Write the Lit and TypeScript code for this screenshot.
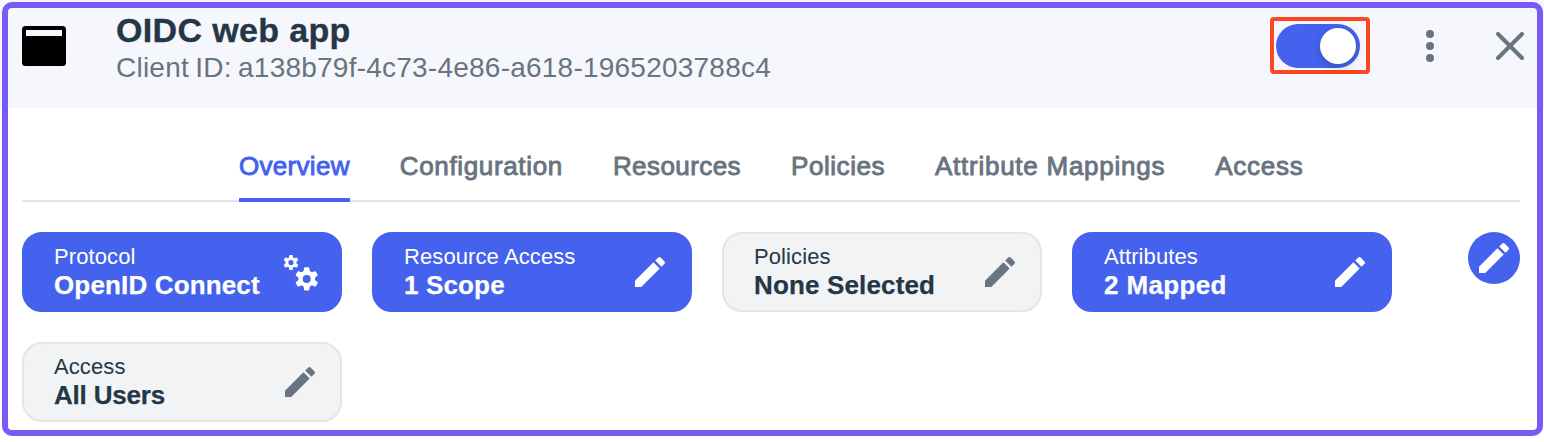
import { LitElement, html, css, svg } from "lit";
import { customElement, property } from "lit/decorators.js";
import { classMap } from "lit/directives/class-map.js";
import { styleMap } from "lit/directives/style-map.js";

const pencil = svg`<path d="M3 17.25V21h3.75L17.81 9.94l-3.75-3.75zM20.71 7.04a1 1 0 0 0 0-1.41l-2.34-2.34a1 1 0 0 0-1.41 0l-1.83 1.83 3.75 3.75z"/>`;

// A six-toothed gear around the origin, about 23 units tall.
const gear = (transform: string) => svg`<g transform=${transform}>
  <circle r="6.15" fill="none" stroke="#fff" stroke-width="4.3" />
  ${[0, 60, 120, 180, 240, 300].map(
    (a) => svg`<path transform="rotate(${a})" d="M-3.3-6.6L-2.6-10.8Q-2.5-11.6-1.7-11.6H1.7Q2.5-11.6 2.6-10.8L3.3-6.6Z" />`
  )}
</g>`;

@customElement("summary-card")
class SummaryCard extends LitElement {
  @property() label = "";
  @property() value = "";
  @property() icon = "pencil";
  @property({ type: Number }) tracking = 0.15;
  @property({ type: Boolean }) active = false;

  static styles = css`
    :host { display: block; }
    .card {
      box-sizing: border-box; width: 320px; height: 80px;
      display: flex; justify-content: space-between;
      padding: 9px 20px 0 30px;
      border: 2px solid #e3e5e9; border-radius: 20px;
      background: #f1f3f5; color: #253746;
    }
    .card.active { background: #4462ed; border-color: #4462ed; color: #fff; }
    .label { font-size: 22px; line-height: 28px; letter-spacing: 0.1px; }
    .value { font-size: 26px; line-height: 28px; font-weight: 700; -webkit-text-stroke: 0.25px currentColor; }
    .icon { display: block; width: 40px; height: 40px; margin-top: 9px; fill: #68747f; }
    .active .icon { fill: #fff; }
  `;

  render() {
    return html`<div class=${classMap({ card: true, active: this.active })}>
      <div>
        <div class="label">${this.label}</div>
        <div class="value" style=${styleMap({ letterSpacing: `${this.tracking}px` })}>${this.value}</div>
      </div>
      ${this.icon === "gears"
        ? html`<svg class="icon" viewBox="0 0 40 40">
            ${gear("translate(26.7 26.9)")}${gear("translate(11 10.5) scale(.65)")}
          </svg>`
        : html`<svg class="icon" viewBox="0 0 24 24">${pencil}</svg>`}
    </div>`;
  }
}

@customElement("app-root")
class AppRoot extends LitElement {
  static styles = css`
    :host {
      display: block; box-sizing: border-box; width: 1544px; height: 442px; overflow: hidden;
      padding: 2px 1px 0 2px; font-family: "Liberation Sans", Arial, sans-serif;
      background: linear-gradient(#f6f7fd 108px, #fff 108px);
    }
    .panel {
      box-sizing: border-box; height: 434px; border: 6px solid #7a5af0; border-radius: 10px;
    }
    .header {
      box-sizing: border-box; height: 100px; display: flex;
      padding: 0 13px 0 14px;
    }
    .app-icon { width: 44px; height: 40px; margin-top: 18px; flex: none; }
    .titles { margin: 2px 0 0 50px; flex: 1; }
    .title {
      font-size: 34px; line-height: 40px; font-weight: 700; color: #253746; letter-spacing: 0.35px;
      -webkit-text-stroke: 0.35px currentColor;
    }
    .client {
      font-size: 28px; line-height: 36px; color: #68747f; letter-spacing: 0.23px; word-spacing: -1.7px;
    }
    .switch-frame {
      box-sizing: border-box; width: 100px; height: 57px; margin-top: 9px; flex: none;
      border: 4px solid #fa4622; border-radius: 4px; padding: 3px 2px;
    }
    .switch {
      box-sizing: border-box; width: 84px; height: 44px; border-radius: 22px; background: #4462ed;
      display: flex; justify-content: flex-end; padding: 4px;
    }
    .knob { width: 36px; height: 36px; border-radius: 50%; background: #fff; box-shadow: 0 3px 8px rgba(0, 0, 0, 0.2); }
    .menu { width: 8px; height: 32px; margin: 22px 0 0 56px; fill: #68747f; flex: none; }
    .close {
      width: 28px; height: 28px; margin: 24px 0 0 62px; flex: none;
      stroke: #68747f; stroke-width: 4; stroke-linecap: round;
    }
    .tabs {
      box-sizing: border-box; height: 94px; margin: 0 17px 0 14px;
      display: flex; justify-content: flex-start; padding-left: 217px; gap: 50px;
      border-bottom: 2px solid #e3e3e9;
    }
    .tab {
      box-sizing: border-box; height: 94px; padding-top: 43px; white-space: nowrap;
      font-size: 26px; line-height: 30px; color: #68747f;
      -webkit-text-stroke: 0.9px currentColor;
    }
    .tab.selected { color: #4462ed; border-bottom: 4px solid #4462ed; }
    .body { display: flex; justify-content: space-between; padding: 30px 17px 0 14px; }
    .cards { display: flex; flex-wrap: wrap; gap: 30px; width: 1390px; }
    .edit {
      width: 52px; height: 52px; border-radius: 50%; background: #4462ed;
      display: flex; align-items: center; justify-content: center;
    }
    .edit-icon { width: 40px; height: 40px; fill: #fff; }
  `;

  private tabs = [
    { name: "Overview", tracking: 0.3 },
    { name: "Configuration", tracking: 0.65 },
    { name: "Resources", tracking: 0.43 },
    { name: "Policies", tracking: 0.55 },
    { name: "Attribute Mappings", tracking: 0.74 },
    { name: "Access", tracking: 0.75 },
  ];

  render() {
    return html`<div class="panel">
      <div class="header">
        <svg class="app-icon" viewBox="0 0 44 40">
          <path fill-rule="evenodd" d="M3.5 0H40.5Q44 0 44 3.5V36.5Q44 40 40.5 40H3.5Q0 40 0 36.5V3.5Q0 0 3.5 0ZM4 4V10H40V4Z" />
        </svg>
        <div class="titles">
          <div class="title">OIDC web app</div>
          <div class="client">Client ID: a138b79f-4c73-4e86-a618-1965203788c4</div>
        </div>
        <div class="switch-frame"><div class="switch"><div class="knob"></div></div></div>
        <svg class="menu" viewBox="0 0 8 32">
          <circle cx="4" cy="4" r="4" /><circle cx="4" cy="16" r="4" /><circle cx="4" cy="28" r="4" />
        </svg>
        <svg class="close" viewBox="0 0 28 28"><path d="M2 2l24 24M26 2l-24 24" /></svg>
      </div>
      <div class="tabs">
        ${this.tabs.map(
          (t, i) => html`<div
            class=${classMap({ tab: true, selected: i === 0 })}
            style=${styleMap({ letterSpacing: `${t.tracking}px` })}
          >${t.name}</div>`
        )}
      </div>
      <div class="body">
        <div class="cards">
          <summary-card label="Protocol" value="OpenID Connect" icon="gears" active></summary-card>
          <summary-card label="Resource Access" value="1 Scope" active></summary-card>
          <summary-card label="Policies" value="None Selected"></summary-card>
          <summary-card label="Attributes" value="2 Mapped" tracking="0.35" active></summary-card>
          <summary-card label="Access" value="All Users" tracking="-0.2"></summary-card>
        </div>
        <div class="edit"><svg class="edit-icon" viewBox="0 0 24 24">${pencil}</svg></div>
      </div>
    </div>`;
  }
}
